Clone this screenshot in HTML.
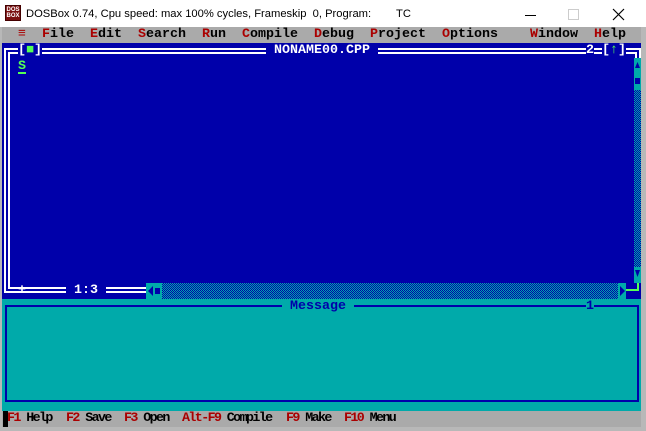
<!DOCTYPE html>
<html><head><meta charset="utf-8"><style>
*{margin:0;padding:0;box-sizing:border-box}
body{width:646px;height:431px;position:relative;overflow:hidden;background:#b8b8b8;font-family:"Liberation Mono",monospace}
.a{position:absolute}
.t{position:absolute;font:bold 13.33px/16px "Liberation Mono","DejaVu Sans Mono",monospace;white-space:pre;height:16px}
.chk{background:repeating-conic-gradient(#0000AA 0 25%,#00AAAA 0 50%) 0 0/2px 2px}
.r{color:#AA0000}
.s{position:absolute;top:411px;font:bold 13.33px/16px "Liberation Mono",monospace;letter-spacing:-1.6px;white-space:pre;color:#000}
</style></head><body>
<!-- title bar -->
<div class="a" style="left:0;top:0;width:646px;height:27px;background:#fff"></div>
<div class="a" style="left:5px;top:5px;width:16px;height:16px;background:#7a1010;border:1px solid #400;color:#fff;font:bold 6px/6px 'Liberation Sans',sans-serif;text-align:center;padding-top:1px">DOS<br>BOX</div>
<div class="a" style="left:26px;top:6px;font:11.2px/16px 'Liberation Sans',sans-serif;color:#000;white-space:pre">DOSBox 0.74, Cpu speed: max 100% cycles, Frameskip  0, Program:</div>
<div class="a" style="left:396px;top:6px;font:11.2px/16px 'Liberation Sans',sans-serif;color:#000">TC</div>
<div class="a" style="left:525px;top:15px;width:11px;height:1px;background:#000"></div>
<div class="a" style="left:568px;top:9px;width:11px;height:11px;border:1px solid #ccc"></div>
<svg class="a" style="left:612px;top:8px" width="13" height="13"><path d="M1 1L12 12M12 1L1 12" stroke="#000" stroke-width="1.2"/></svg>

<!-- DOS screen -->
<div class="a" style="left:2px;top:27px;width:639px;height:400px;background:#0000AA"></div>
<!-- menu -->
<div class="a" style="left:2px;top:27px;width:639px;height:16px;background:#AAAAAA"></div>
<div class="t" style="left:2px;top:27px;color:#000">  <span class="r">≡</span>  <span class="r">F</span>ile  <span class="r">E</span>dit  <span class="r">S</span>earch  <span class="r">R</span>un  <span class="r">C</span>ompile  <span class="r">D</span>ebug  <span class="r">P</span>roject  <span class="r">O</span>ptions    <span class="r">W</span>indow  <span class="r">H</span>elp</div>

<!-- edit frame -->
<div class="a" style="left:4px;top:48px;width:637px;height:245px;border:2px solid #fff"></div>
<div class="a" style="left:8px;top:52px;width:629px;height:237px;border:2px solid #fff"></div>
<div class="t" style="left:18px;top:43px;color:#fff;background:#0000AA">[<span style="color:#55FF55">■</span>]</div>
<div class="t" style="left:266px;top:43px;color:#fff;background:#0000AA"> NONAME00.CPP </div>
<div class="t" style="left:586px;top:43px;color:#fff;background:#0000AA">2</div>
<div class="t" style="left:602px;top:43px;color:#fff;background:#0000AA">[<span style="color:#55FF55">↑</span>]</div>
<div class="t" style="left:18px;top:59px;color:#55FF55">S</div>
<div class="a" style="left:18px;top:72px;width:8px;height:2px;background:#55FF55"></div>

<!-- vertical scrollbar -->
<div class="a chk" style="left:634px;top:58px;width:7px;height:225px"></div>
<div class="a" style="left:634px;top:58px;width:7px;height:32px;background:#00AAAA"></div>
<div class="a" style="left:634px;top:267px;width:7px;height:16px;background:#00AAAA"></div>
<svg class="a" style="left:634px;top:58px" width="7" height="225"><polygon points="1,10 3.5,4 6,10" fill="#0000AA"/><rect x="1" y="20" width="5" height="6" fill="#0000AA"/><polygon points="1,212 6,212 3.5,219" fill="#0000AA"/></svg>

<!-- bottom edit row -->
<div class="t" style="left:18px;top:283px;color:#fff">+</div>
<div class="t" style="left:66px;top:283px;color:#fff;background:#0000AA"> 1:3 </div>
<div class="a chk" style="left:146px;top:283px;width:480px;height:16px"></div>
<div class="a" style="left:146px;top:283px;width:16px;height:16px;background:#00AAAA"></div>
<div class="a" style="left:618px;top:283px;width:8px;height:16px;background:#00AAAA"></div>
<svg class="a" style="left:146px;top:283px" width="480" height="16"><polygon points="7,3 2,8 7,13" fill="#0000AA"/><rect x="9" y="5" width="5" height="6" fill="#0000AA"/><polygon points="474,3 479,8 474,13" fill="#0000AA"/></svg>
<div class="a" style="left:626px;top:283px;width:15px;height:16px;background:#0000AA"></div>
<div class="a" style="left:626px;top:289px;width:13px;height:2px;background:#55FF55"></div>
<div class="a" style="left:637px;top:283px;width:2px;height:8px;background:#55FF55"></div>

<!-- message window -->
<div class="a" style="left:2px;top:299px;width:639px;height:112px;background:#00AAAA"></div>
<div class="a" style="left:5px;top:305px;width:634px;height:97px;border:2px solid #0000AA"></div>
<div class="t" style="left:282px;top:299px;color:#0000AA;background:#00AAAA"> Message </div>
<div class="t" style="left:586px;top:299px;color:#0000AA;background:#00AAAA">1</div>

<!-- status -->
<div class="a" style="left:2px;top:411px;width:639px;height:16px;background:#AAAAAA"></div>
<div class="a" style="left:3px;top:411px;width:5px;height:16px;background:#000"></div>
<div class="s" style="left:7px"><span class="r">F1</span> Help</div>
<div class="s" style="left:66px"><span class="r">F2</span> Save</div>
<div class="s" style="left:124px"><span class="r">F3</span> Open</div>
<div class="s" style="left:182px"><span class="r">Alt-F9</span> Compile</div>
<div class="s" style="left:286px"><span class="r">F9</span> Make</div>
<div class="s" style="left:344px"><span class="r">F10</span> Menu</div>
</body></html>
